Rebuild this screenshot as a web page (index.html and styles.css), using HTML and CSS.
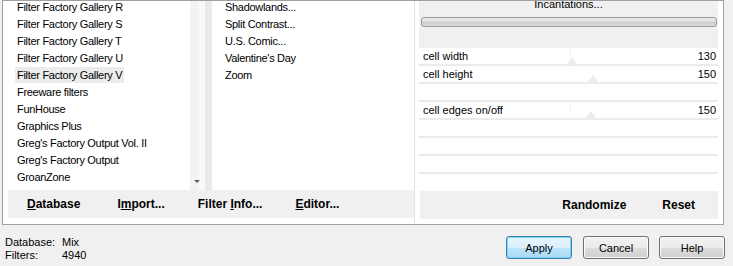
FILE: index.html
```html
<!DOCTYPE html>
<html lang="en">
<head>
    <meta charset="UTF-8">
    <title>Filters Unlimited</title>
    <link rel="stylesheet" href="styles.css">
</head>
<body>
    <div id="frame">
        <!-- Category and filter lists -->
        <div id="left-pane">
            <div class="lists">
                <ul class="list list-cats">
                    <li>Filter Factory Gallery R</li>
                    <li>Filter Factory Gallery S</li>
                    <li>Filter Factory Gallery T</li>
                    <li>Filter Factory Gallery U</li>
                    <li><span class="selected">Filter Factory Gallery V</span></li>
                    <li>Freeware filters</li>
                    <li>FunHouse</li>
                    <li>Graphics Plus</li>
                    <li>Greg's Factory Output Vol. II</li>
                    <li>Greg's Factory Output</li>
                    <li>GroanZone</li>
                    <li>Harry's Power Grizzlies</li>
                </ul>
                <div class="scrollbar"><span class="arrow-down"></span></div>
                <div class="list-gap"></div>
                <ul class="list list-filters">
                    <li>Shadowlands...</li>
                    <li>Split Contrast...</li>
                    <li>U.S. Comic...</li>
                    <li>Valentine's Day</li>
                    <li>Zoom</li>
                </ul>
            </div>
            <div class="toolbar toolbar-left">
                <span class="tool tool-db"><u>D</u>atabase</span>
                <span class="tool tool-import">I<u>m</u>port...</span>
                <span class="tool tool-info">Filter <u>I</u>nfo...</span>
                <span class="tool tool-editor"><u>E</u>ditor...</span>
            </div>
        </div>

        <!-- Parameters panel -->
        <div id="right-pane">
            <div class="preset">
                <div class="preset-name">Incantations...</div>
                <div class="preset-bar"></div>
            </div>
            <div class="params">
                <div class="param">
                    <span>cell width</span><span>130</span>
                    <i class="tick" style="left: 151px"></i>
                    <i class="thumb" style="left: 147px"></i>
                </div>
                <div class="param">
                    <span>cell height</span><span>150</span>
                    <i class="thumb" style="left: 168px"></i>
                </div>
                <div class="param"></div>
                <div class="param">
                    <span>cell edges on/off</span><span>150</span>
                    <i class="tick" style="left: 151px"></i>
                    <i class="thumb" style="left: 166px"></i>
                </div>
                <div class="param"></div>
                <div class="param"></div>
                <div class="param"></div>
                <div class="param last"></div>
            </div>
            <div class="toolbar toolbar-right">
                <span class="tool">Randomize</span>
                <span class="tool">Reset</span>
            </div>
        </div>
    </div>

    <!-- Status and dialog buttons -->
    <div id="status">
        <div class="info">
            <span>Database:</span><span>Mix</span>
            <span>Filters:</span><span>4940</span>
        </div>
        <div class="buttons">
            <button class="btn btn-default">Apply</button>
            <button class="btn">Cancel</button>
            <button class="btn">Help</button>
        </div>
    </div>
</body>
</html>
```

FILE: styles.css
```css
/* Global Styles */
body {
    margin: 0;
    padding-left: 2px;
    width: 733px;
    height: 266px;
    box-sizing: border-box;
    overflow: hidden;
    font-family: "Liberation Sans", Arial, sans-serif;
    font-size: 11px;
    color: #000000;
    background-color: #f0f0f0;
}

/* Frame */
#frame {
    display: flex;
    width: 722px;
    height: 225px;
    box-sizing: border-box;
    border: 1px solid #a0a0a0;
    background-color: #ffffff;
}

/* Left Pane */
#left-pane {
    width: 411px;
    border-right: 1px solid #e2e2e2;
    display: flex;
    flex-direction: column;
}

.lists {
    display: flex;
    height: 189px;
    overflow: hidden;
}

.list {
    list-style: none;
    margin: -2px 0 0 0;
    padding: 0;
    letter-spacing: -0.3px;
}

.list li {
    height: 17px;
    line-height: 17px;
    white-space: nowrap;
}

.list-cats {
    width: 187px;
    padding-left: 14px;
    box-sizing: border-box;
}

.list-cats .selected {
    margin-left: -2px;
    padding: 2px 2px;
    background-color: #ececec;
}

.list-filters {
    flex: 1;
    padding-left: 13px;
}

.scrollbar {
    width: 15px;
    position: relative;
    background: linear-gradient(to right, #f3f3f3 0, #f3f3f3 9px, #f9f9f9 9px);
}

.arrow-down {
    position: absolute;
    left: 4px;
    bottom: 7px;
    border-left: 3px solid transparent;
    border-right: 3px solid transparent;
    border-top: 3px solid #606060;
}

.list-gap {
    width: 7px;
    background-color: #e9e9e9;
}

/* Toolbars */
.toolbar {
    display: flex;
    align-items: center;
    height: 28px;
    background-color: #f0f0f0;
    font-size: 12px;
    font-weight: bold;
}

.toolbar-left {
    margin-left: 5px;
    padding-left: 19px;
}

.tool-import {
    margin-left: 37px;
}

.tool-info {
    margin-left: 33px;
}

.tool-editor {
    margin-left: 33px;
}

.toolbar-right {
    margin-top: 1px;
    margin-left: 1px;
    justify-content: flex-end;
    padding-right: 23px;
    gap: 36px;
}

/* Right Pane */
#right-pane {
    flex: 1;
    margin-left: 4px;
    margin-right: 5px;
    display: flex;
    flex-direction: column;
}

.preset {
    height: 47px;
    background-color: #f0f0f0;
    overflow: hidden;
}

.preset-name {
    margin-top: -3px;
    line-height: 13px;
    text-align: center;
}

.preset-bar {
    margin: 6px 1px 0 2px;
    height: 10px;
    box-sizing: border-box;
    border: 1px solid #9a9a9a;
    border-radius: 3px;
    background: linear-gradient(to bottom, #eeeeee 0%, #dddddd 45%, #cfcfcf 55%, #d8d8d8 100%);
}

.param {
    position: relative;
    display: flex;
    justify-content: space-between;
    height: 16px;
    line-height: 16px;
    padding: 0 2px 0 4px;
    border-bottom: 2px solid #ebebeb;
}

.param.last {
    border-bottom: none;
}

.param .tick {
    position: absolute;
    top: 0;
    width: 1px;
    height: 9px;
    background-color: #ededed;
}

.param .thumb {
    position: absolute;
    top: 9px;
    width: 0;
    height: 0;
    border-left: 6px solid transparent;
    border-right: 6px solid transparent;
    border-bottom: 8px solid #ececec;
}

/* Status */
#status {
    display: flex;
    justify-content: space-between;
    padding-right: 8px;
}

.info {
    display: grid;
    grid-template-columns: 57px auto;
    padding: 11px 0 0 3px;
    line-height: 13px;
}

.buttons {
    display: flex;
    gap: 10px;
    margin-top: 11px;
}

.btn {
    width: 66px;
    height: 23px;
    padding: 0;
    font-family: "Liberation Sans", Arial, sans-serif;
    font-size: 11px;
    color: #000000;
    border: 1px solid #707070;
    border-radius: 3px;
    background: linear-gradient(to bottom, #f2f2f2 0%, #ebebeb 50%, #dddddd 51%, #cfcfcf 100%);
    box-shadow: inset 0 0 0 1px #fbfbfb;
}

.btn-default {
    margin-right: 1px;
    border-color: #3c7fb1;
    background: linear-gradient(to bottom, #eaf6fd 0%, #d9f0fc 50%, #bee6fd 51%, #a7d9f5 100%);
    box-shadow: inset 0 0 0 1px #7ad6f4;
}
```
